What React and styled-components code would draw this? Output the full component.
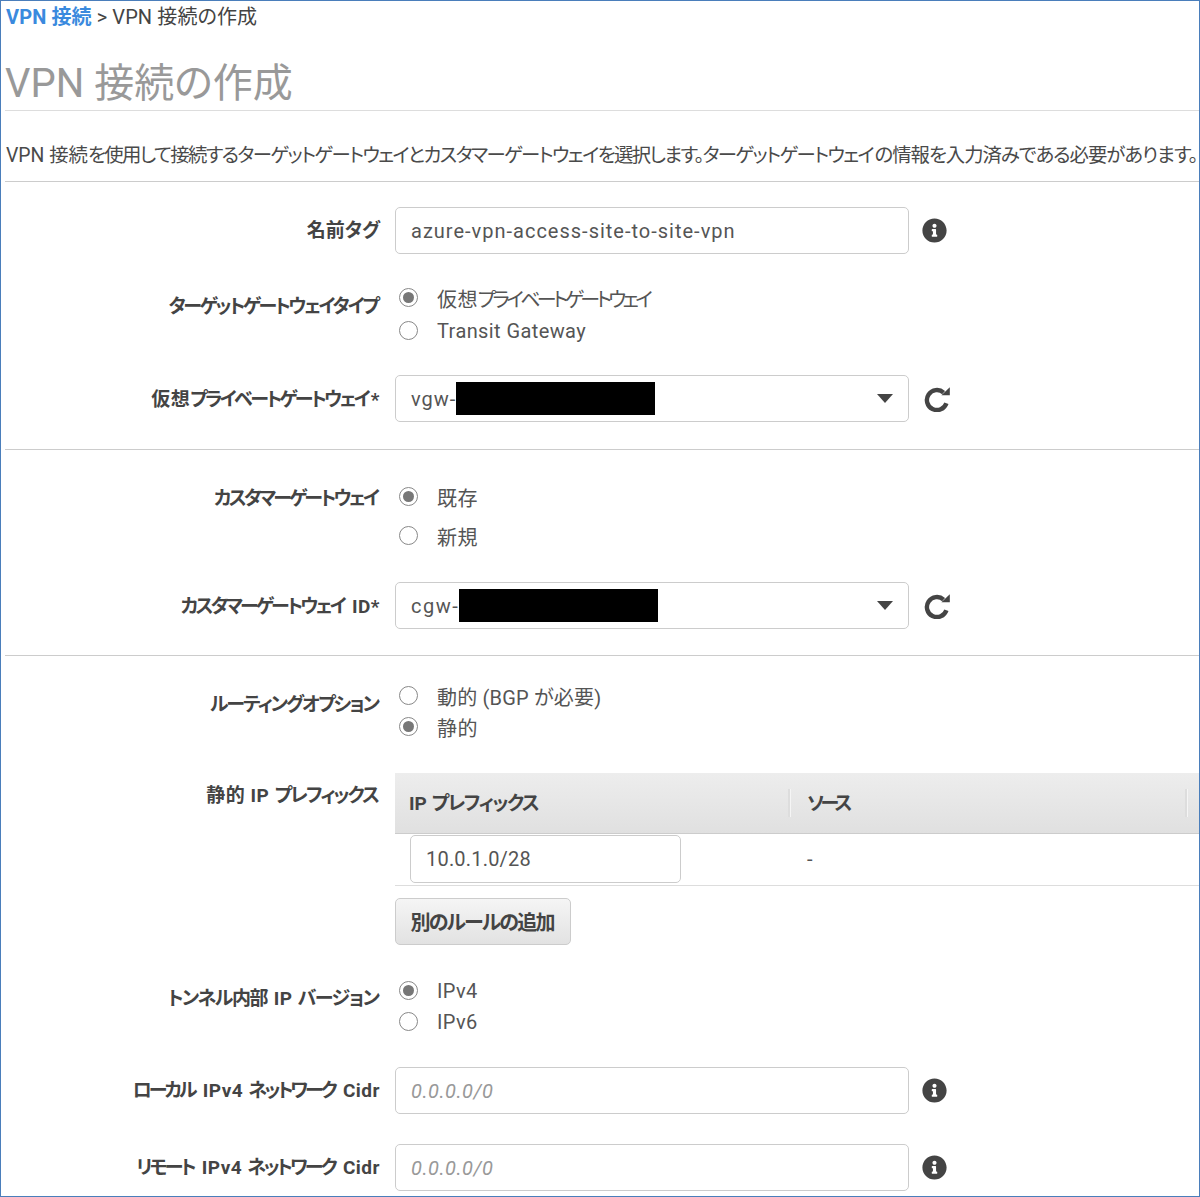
import React from "react";
import styled, { createGlobalStyle } from "styled-components";
import { FaInfoCircle } from "react-icons/fa";

const Global = createGlobalStyle`
  html, body { margin: 0; padding: 0; background: #fff; }
  body {
    font-family: Roboto, "Noto Sans CJK JP", sans-serif;
    font-feature-settings: "palt";
    color: #444;
  }
  * { box-sizing: border-box; }
`;

const Frame = styled.div`
  width: 1200px;
  height: 1197px;
  border: 1px solid #4a7ebb;
  padding-left: 4px;
  overflow: hidden;
  background: #fff;
`;

/* Katakana runs are condensed in the reference; each parent sets how much.
   The margin gives back the tracking after the run's last glyph. */
const Kana = styled.span`
  letter-spacing: var(--kana-track, 0px);
  margin-right: calc(var(--kana-track, 0px) * -1);
`;
const LooseKana = styled.span`
  letter-spacing: -1.04px;
`;

const Crumbs = styled.div`
  height: 32px;
  padding: 2px 0 0 1px;
  font-size: 20px;
  line-height: 29px;
  letter-spacing: 0.1px;
  color: #444;
  white-space: nowrap;
`;
const CrumbLink = styled.a`
  color: #3a8ade;
  font-weight: 700;
`;
const Title = styled.h1`
  margin: 0;
  height: 78px;
  padding-top: 22px;
  font-size: 40px;
  line-height: 58px;
  font-weight: 400;
  color: #999;
  border-bottom: 1px solid #ddd;
  white-space: nowrap;
`;
const Intro = styled.p`
  --kana-track: -1.62px;
  margin: 0;
  height: 71px;
  padding: 31px 0 0 1px;
  font-size: 19.4px;
  line-height: 28px;
  color: #4a4a4a;
  border-bottom: 1px solid #ccc;
  white-space: nowrap;
`;
const Row = styled.div`
  display: grid;
  grid-template-columns: 375px minmax(0, 1fr);
  column-gap: 15px;
  margin-top: ${(p) => p.$top || 0}px;
`;
const Label = styled.label`
  --kana-track: ${(p) => p.$track || 0}px;
  text-align: right;
  font-size: 19px;
  font-weight: 700;
  line-height: 28px;
  letter-spacing: 0.5px;
  color: #444;
  padding-top: ${(p) => p.$pad || 0}px;
  white-space: nowrap;
`;
const ControlLine = styled.div`
  display: flex;
  align-items: center;
  gap: 13px;
`;
const Field = styled.div`
  width: 514px;
  height: 47px;
  padding: 0 15px;
  display: flex;
  align-items: center;
  border: 1px solid #ccc;
  border-radius: 5px;
  background: #fff;
  font-size: 20px;
  letter-spacing: ${(p) => p.$track ?? 0.5}px;
  color: #555;
  white-space: nowrap;
`;
const Placeholder = styled.span`
  font-style: italic;
  color: #999;
`;
const Redact = styled.span`
  display: block;
  width: ${(p) => p.$w}px;
  height: 33px;
  background: #000;
`;
const Caret = styled.span`
  margin-left: auto;
  width: 0;
  height: 0;
  border-left: 8.5px solid transparent;
  border-right: 8.5px solid transparent;
  border-top: 9px solid #444;
`;
const InfoIcon = styled(FaInfoCircle)`
  font-size: 25px;
  color: #444;
`;
const RefreshSvg = styled.svg`
  width: 27px;
  height: 27px;
  flex: none;
  margin-left: 2px;
  color: #444;
`;
const Radios = styled.div`
  --kana-track: -3.65px;
  display: flex;
  flex-direction: column;
  gap: ${(p) => p.$gap}px;
  padding-left: 4px;
`;
const RadioLine = styled.div`
  display: flex;
  align-items: center;
  height: 28px;
  gap: 19px;
  font-size: 20px;
  color: #555;
  letter-spacing: ${(p) => p.$track ?? 0.4}px;
  white-space: nowrap;
`;
const RadioText = styled.span``;
const RadioDot = styled.span`
  width: 19px;
  height: 19px;
  flex: none;
  margin-top: -2px;
  border-radius: 50%;
  border: 1px solid #888;
  background: #fff;
  display: flex;
  align-items: center;
  justify-content: center;
  &::after {
    content: "";
    display: ${(p) => (p.$on ? "block" : "none")};
    width: 11px;
    height: 11px;
    border-radius: 50%;
    background: #777;
  }
`;
const Rule = styled.hr`
  margin: ${(p) => p.$top}px 0 0;
  border: 0;
  border-top: 1px solid #ccc;
`;
const TableWrap = styled.div`
  width: 804px;
`;
const THead = styled.div`
  display: grid;
  grid-template-columns: 395px 397px 12px;
  height: 61px;
  background: linear-gradient(#ededed, #e0e0e0);
  border-bottom: 1px solid #ccc;
  align-items: center;
`;
const THCell = styled.div`
  --kana-track: ${(p) => p.$track}px;
  height: 28px;
  padding-left: ${(p) => p.$pad}px;
  border-right: 2px solid #ddd;
  box-shadow: 1px 0 0 #f5f5f5;
  font-size: 19px;
  font-weight: 700;
  line-height: 30px;
  color: #444;
`;
const TBodyRow = styled.div`
  display: grid;
  grid-template-columns: 395px 1fr;
  height: 52px;
  border-bottom: 1px solid #ddd;
  align-items: start;
  padding-top: 1px;
`;
const CellField = styled(Field)`
  width: 271px;
  height: 48px;
  margin: 0 0 0 15px;
`;
const DashCell = styled.div`
  padding-left: 17px;
  font-size: 20px;
  line-height: 48px;
  color: #555;
`;
const AddButton = styled.button`
  --kana-track: -1.85px;
  display: block;
  margin-top: 12px;
  width: 176px;
  height: 47px;
  padding: 0;
  border: 1px solid #ccc;
  border-radius: 5px;
  background: linear-gradient(#f5f5f5, #e2e2e2);
  font: 700 20px Roboto, "Noto Sans CJK JP", sans-serif;
  font-feature-settings: "palt";
  color: #444;
`;

const RefreshIcon = () => (
  <RefreshSvg viewBox="0 0 27 27" aria-hidden="true">
    <path d="M22.4 18.2A10 10 0 1 1 19.6 7.6" fill="none" stroke="currentColor" strokeWidth="4.4" />
    <path d="M25.8 2.2V10.2H17.4Z" fill="currentColor" />
  </RefreshSvg>
);

const Refreshable = ({ children }) => (
  <ControlLine>
    {children}
    <RefreshIcon />
  </ControlLine>
);

export default function App() {
  return (
    <Frame>
      <Global />
      <Crumbs>
        <CrumbLink>VPN 接続</CrumbLink> &gt; VPN 接続の作成
      </Crumbs>
      <Title>VPN 接続の作成</Title>
      <Intro>
        VPN 接続<Kana>を使用して接続するターゲットゲートウェイとカスタマーゲートウェイを選択します。ターゲットゲートウェイ</Kana><LooseKana>の情報を入力済みである必要があります。</LooseKana>
      </Intro>

      <Row $top={25}>
        <Label $pad={10}><Kana>名前タグ</Kana></Label>
        <ControlLine>
          <Field $track={1}>azure-vpn-access-site-to-site-vpn</Field>
          <InfoIcon />
        </ControlLine>
      </Row>

      <Row $top={30}>
        <Label $pad={9} $track={-2.3}><Kana>ターゲットゲートウェイタイプ</Kana></Label>
        <Radios $gap={5}>
          <RadioLine><RadioDot $on /><RadioText>仮想<Kana>プライベートゲートウェイ</Kana></RadioText></RadioLine>
          <RadioLine><RadioDot /><RadioText>Transit Gateway</RadioText></RadioLine>
        </Radios>
      </Row>

      <Row $top={30}>
        <Label $pad={11} $track={-2.6}>仮想<Kana>プライベートゲートウェイ</Kana>*</Label>
        <Refreshable>
          <Field $track={1}>vgw-<Redact $w={199} /><Caret /></Field>
        </Refreshable>
      </Row>

      <Rule $top={27} />

      <Row $top={33}>
        <Label $pad={2} $track={-2.7}><Kana>カスタマーゲートウェイ</Kana></Label>
        <Radios $gap={11}>
          <RadioLine><RadioDot $on /><RadioText>既存</RadioText></RadioLine>
          <RadioLine><RadioDot /><RadioText>新規</RadioText></RadioLine>
        </Radios>
      </Row>

      <Row $top={32}>
        <Label $pad={11} $track={-2.7}><Kana>カスタマーゲートウェイ</Kana> ID*</Label>
        <Refreshable>
          <Field $track={1.5}>cgw-<Redact $w={199} /><Caret /></Field>
        </Refreshable>
      </Row>

      <Rule $top={26} />

      <Row $top={26}>
        <Label $pad={9} $track={-2}><Kana>ルーティングオプション</Kana></Label>
        <Radios $gap={3}>
          <RadioLine $track={0.2}><RadioDot /><RadioText>動的 (BGP が必要)</RadioText></RadioLine>
          <RadioLine><RadioDot $on /><RadioText>静的</RadioText></RadioLine>
        </Radios>
      </Row>

      <Row $top={32}>
        <Label $pad={9} $track={-1.95}>静的 IP <Kana>プレフィックス</Kana></Label>
        <div>
          <TableWrap>
            <THead>
              <THCell $pad={14} $track={-1.5}>IP <Kana>プレフィックス</Kana></THCell>
              <THCell $pad={17} $track={-3.5}><Kana>ソース</Kana></THCell>
            </THead>
            <TBodyRow>
              <CellField $track={0.2}>10.0.1.0/28</CellField>
              <DashCell>-</DashCell>
            </TBodyRow>
          </TableWrap>
          <AddButton><Kana>別のルールの追加</Kana></AddButton>
        </div>
      </Row>

      <Row $top={32}>
        <Label $pad={8} $track={-1.45}><Kana>トンネル内部</Kana> IP <Kana>バージョン</Kana></Label>
        <Radios $gap={3}>
          <RadioLine><RadioDot $on /><RadioText>IPv4</RadioText></RadioLine>
          <RadioLine><RadioDot /><RadioText>IPv6</RadioText></RadioLine>
        </Radios>
      </Row>

      <Row $top={31}>
        <Label $pad={10} $track={-2.95}><Kana>ローカル</Kana> IPv4 <Kana>ネットワーク</Kana> Cidr</Label>
        <ControlLine>
          <Field><Placeholder>0.0.0.0/0</Placeholder></Field>
          <InfoIcon />
        </ControlLine>
      </Row>

      <Row $top={30}>
        <Label $pad={10} $track={-2.75}><Kana>リモート</Kana> IPv4 <Kana>ネットワーク</Kana> Cidr</Label>
        <ControlLine>
          <Field><Placeholder>0.0.0.0/0</Placeholder></Field>
          <InfoIcon />
        </ControlLine>
      </Row>
    </Frame>
  );
}
